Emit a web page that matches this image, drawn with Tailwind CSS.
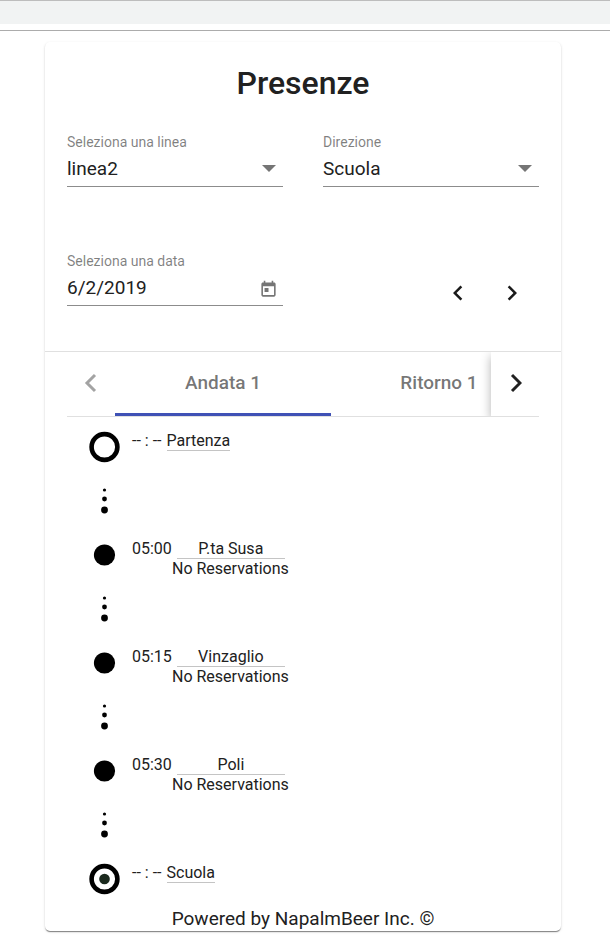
<!DOCTYPE html>
<html lang="it">
<head>
<meta charset="utf-8">
<meta name="viewport" content="width=device-width, initial-scale=1">
<title>Presenze</title>
<script src="https://cdn.jsdelivr.net/npm/@tailwindcss/browser@4"></script>
</head>
<body class="bg-white font-[Roboto,sans-serif] text-[#212121]">
<header class="h-[31px] border-t border-b border-t-[#bdbdbd] border-b-[#acacac]">
  <div class="h-[23px] bg-[#f1f3f3]"></div>
</header>
<div class="pt-[11px] pr-[49px] pb-[9px] pl-[45px]">
<main class="rounded-[5px] bg-white shadow-[0_2px_1px_-1px_rgba(0,0,0,0.3),0_1px_1px_0_rgba(0,0,0,0.2),0_1px_3px_0_rgba(0,0,0,0.12)]">
  <h1 class="pt-[21px] text-center text-[32px] leading-10 font-medium">Presenze</h1>

  <form class="grid grid-cols-2 gap-x-10 px-[22px] pt-[29px]">
    <div class="flex h-[119px] flex-col">
      <label for="line" class="text-sm leading-5 text-black/50">Seleziona una linea</label>
      <div class="relative border-b border-[#8c8c8c]">
        <select id="line" class="block h-[34px] w-full appearance-none bg-transparent text-[19px]"><option>linea2</option></select>
        <svg class="pointer-events-none absolute top-[13px] right-[7px]" width="14" height="7" viewBox="0 0 14 7"><path d="M0 0h14L7 7z" fill="#757575"/></svg>
      </div>
    </div>
    <div class="flex h-[119px] flex-col">
      <label for="direction" class="text-sm leading-5 text-black/50">Direzione</label>
      <div class="relative border-b border-[#8c8c8c]">
        <select id="direction" class="block h-[34px] w-full appearance-none bg-transparent text-[19px]"><option>Scuola</option></select>
        <svg class="pointer-events-none absolute top-[13px] right-[7px]" width="14" height="7" viewBox="0 0 14 7"><path d="M0 0h14L7 7z" fill="#757575"/></svg>
      </div>
    </div>
    <div class="flex h-[100px] flex-col">
      <label for="date" class="text-sm leading-5 text-black/50">Seleziona una data</label>
      <div class="flex items-center border-b border-[#8c8c8c]">
        <input id="date" type="text" value="6/2/2019" class="block h-[34px] w-full min-w-0 bg-transparent pb-0.5 text-[19px] outline-none">
        <button type="button" aria-label="Apri calendario" class="mr-[5px] pt-0.5">
          <svg width="19" height="19" viewBox="0 0 24 24" fill="#757575"><path d="M19 3h-1V1h-2v2H8V1H6v2H5c-1.110 0-1.990.9-1.990 2L3 19c0 1.100.890 2 2 2h14c1.100 0 2-.9 2-2V5c0-1.100-.9-2-2-2zm0 16H5V8h14v11zM7 10h5v5H7z"/></svg>
        </button>
      </div>
    </div>
    <div class="flex items-start justify-end gap-[14px] pt-[22px] pr-[7px]">
      <button type="button" aria-label="Giorno precedente" class="flex size-10 items-center justify-center"><svg width="30" height="30" viewBox="0 0 24 24"><path d="M15.410 7.410L14 6l-6 6 6 6 1.410-1.410L10.830 12z" fill="#1a1a1a"/></svg></button>
      <button type="button" aria-label="Giorno successivo" class="flex size-10 items-center justify-center"><svg width="30" height="30" viewBox="0 0 24 24"><path d="M10 6L8.590 7.410 13.170 12l-4.580 4.590L10 18l6-6z" fill="#1a1a1a"/></svg></button>
    </div>
  </form>

  <section class="border-t border-[#e0e0e0] px-[22px]">
    <div class="flex h-[65px] border-b border-[#e0e0e0]">
      <button type="button" aria-label="Schede precedenti" disabled class="flex w-12 shrink-0 items-center justify-center pb-0.5"><svg width="14" height="20" viewBox="0 0 14 20" fill="none" stroke="#a3a3a3" stroke-width="3"><path d="M11 2L3 10l8 8"/></svg></button>
      <div role="tablist" class="flex min-w-0 flex-1 overflow-hidden text-[19px] font-medium text-black/55">
        <button role="tab" aria-selected="true" class="w-[216px] shrink-0 border-b-3 border-[#3f51b5] pt-px">Andata 1</button>
        <button role="tab" aria-selected="false" class="w-[216px] shrink-0 pb-0.5">Ritorno 1</button>
      </div>
      <div class="-ml-5 shrink-0 overflow-hidden pl-5">
        <button type="button" aria-label="Schede successive" class="flex h-full w-12 items-center justify-center bg-white pb-0.5 shadow-[0_4px_10px_rgba(0,0,0,0.3)]"><svg width="14" height="20" viewBox="0 0 14 20" fill="none" stroke="#212121" stroke-width="3"><path d="M4 2l8 8-8 8"/></svg></button>
      </div>
    </div>

    <ul class="pt-[3px] pl-[22px] text-base leading-5">
      <li class="flex h-27 gap-[12px]">
        <svg class="shrink-0" width="31" height="108" viewBox="0 0 31 108"><circle cx="15.500" cy="27" r="12.900" fill="none" stroke="#000" stroke-width="4.600"/><circle cx="15.500" cy="70" r="1.600"/><circle cx="15.500" cy="79" r="2.400"/><circle cx="15.500" cy="90" r="3.400"/></svg>
        <p class="flex items-start gap-[5px] pt-[11px]"><span>-- : --</span><span class="h-5 border-b border-[#c4c4c4]">Partenza</span></p>
      </li>
      <li class="flex h-27 gap-[12px]">
        <svg class="shrink-0" width="31" height="108" viewBox="0 0 31 108"><circle cx="15.500" cy="27" r="10.600"/><circle cx="15.500" cy="70" r="1.600"/><circle cx="15.500" cy="79" r="2.400"/><circle cx="15.500" cy="90" r="3.400"/></svg>
        <div class="pt-[11px]"><p class="flex gap-[5px]"><span>05:00</span><span class="h-5 w-27 border-b border-[#c4c4c4] text-center">P.ta Susa</span></p><p class="pl-10">No Reservations</p></div>
      </li>
      <li class="flex h-27 gap-[12px]">
        <svg class="shrink-0" width="31" height="108" viewBox="0 0 31 108"><circle cx="15.500" cy="27" r="10.600"/><circle cx="15.500" cy="70" r="1.600"/><circle cx="15.500" cy="79" r="2.400"/><circle cx="15.500" cy="90" r="3.400"/></svg>
        <div class="pt-[11px]"><p class="flex gap-[5px]"><span>05:15</span><span class="h-5 w-27 border-b border-[#c4c4c4] text-center">Vinzaglio</span></p><p class="pl-10">No Reservations</p></div>
      </li>
      <li class="flex h-27 gap-[12px]">
        <svg class="shrink-0" width="31" height="108" viewBox="0 0 31 108"><circle cx="15.500" cy="27" r="10.600"/><circle cx="15.500" cy="70" r="1.600"/><circle cx="15.500" cy="79" r="2.400"/><circle cx="15.500" cy="90" r="3.400"/></svg>
        <div class="pt-[11px]"><p class="flex gap-[5px]"><span>05:30</span><span class="h-5 w-27 border-b border-[#c4c4c4] text-center">Poli</span></p><p class="pl-10">No Reservations</p></div>
      </li>
      <li class="flex gap-[12px]">
        <svg class="shrink-0" width="31" height="54" viewBox="0 0 31 54"><circle cx="15.500" cy="27" r="12.900" fill="none" stroke="#000" stroke-width="4.600"/><circle cx="15.500" cy="27" r="5.300" fill="#1b2a1e"/></svg>
        <p class="flex items-start gap-[5px] pt-[11px]"><span>-- : --</span><span class="h-5 border-b border-[#c4c4c4]">Scuola</span></p>
      </li>
    </ul>
  </section>
  <footer class="pt-px text-center text-[19px] leading-6">Powered by NapalmBeer Inc. ©</footer>
</main>
</div>
</body>
</html>
